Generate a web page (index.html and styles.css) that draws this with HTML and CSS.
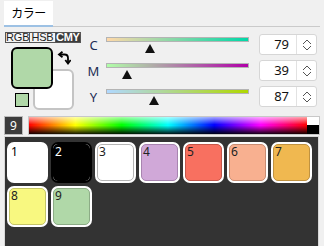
FILE: index.html
```
<!DOCTYPE html>
<html lang="ja">
<head>
  <meta charset="UTF-8" />
  <title>カラー</title>
  <link rel="stylesheet" href="styles.css">
</head>
<body>
  <div class="tabs">
    <div class="tab">カラー</div>
  </div>

  <div class="main">
    <div class="left">
      <div class="modes">
        <span>RGB</span><span>HSB</span><span class="on">CMY</span>
      </div>
      <div class="chips">
        <div class="chip-back"></div>
        <div class="chip-front"></div>
        <svg class="swap" width="14" height="14" viewBox="0 0 14 14">
          <path d="M3 3.5 H7.5 Q11 3.5 11 7 V11.5" fill="none" stroke="#000" stroke-width="1.8"/>
          <path d="M5.5 0.8 L2 3.5 L5.5 6.2" fill="none" stroke="#000" stroke-width="1.8"/>
          <path d="M8.3 9 L11 12.5 L13.7 9" fill="none" stroke="#000" stroke-width="1.8"/>
        </svg>
        <div class="chip-small"></div>
      </div>
    </div>

    <div class="sliders">
      <div class="row">
        <span class="label">C</span>
        <div class="track-wrap">
          <div class="track track-c"></div>
          <div class="thumb" style="left: 38.8px"></div>
        </div>
        <div class="num">
          <span class="val">79</span>
          <span class="spin">
            <svg width="10" height="14" viewBox="0 0 10 14"><polyline points="1,6 5,2 9,6" fill="none" stroke="#555" stroke-width="1"/><polyline points="1,8 5,12 9,8" fill="none" stroke="#555" stroke-width="1"/></svg>
          </span>
        </div>
      </div>
      <div class="row">
        <span class="label">M</span>
        <div class="track-wrap">
          <div class="track track-m"></div>
          <div class="thumb" style="left: 16.4px"></div>
        </div>
        <div class="num">
          <span class="val">39</span>
          <span class="spin">
            <svg width="10" height="14" viewBox="0 0 10 14"><polyline points="1,6 5,2 9,6" fill="none" stroke="#555" stroke-width="1"/><polyline points="1,8 5,12 9,8" fill="none" stroke="#555" stroke-width="1"/></svg>
          </span>
        </div>
      </div>
      <div class="row">
        <span class="label">Y</span>
        <div class="track-wrap">
          <div class="track track-y"></div>
          <div class="thumb" style="left: 43.3px"></div>
        </div>
        <div class="num">
          <span class="val">87</span>
          <span class="spin">
            <svg width="10" height="14" viewBox="0 0 10 14"><polyline points="1,6 5,2 9,6" fill="none" stroke="#555" stroke-width="1"/><polyline points="1,8 5,12 9,8" fill="none" stroke="#555" stroke-width="1"/></svg>
          </span>
        </div>
      </div>
    </div>
  </div>

  <div class="hue-row">
    <div class="index">9</div>
    <div class="spectrum">
      <div class="hues"></div>
      <div class="bw"></div>
    </div>
  </div>

  <div class="palette">
    <div class="swatches">
      <div class="sw c1"><div class="fill">1</div></div>
      <div class="sw c2"><div class="fill">2</div></div>
      <div class="sw c3"><div class="fill">3</div></div>
      <div class="sw c4"><div class="fill">4</div></div>
      <div class="sw c5"><div class="fill">5</div></div>
      <div class="sw c6"><div class="fill">6</div></div>
      <div class="sw c7"><div class="fill">7</div></div>
      <div class="sw c8"><div class="fill">8</div></div>
      <div class="sw c9"><div class="fill">9</div></div>
    </div>
  </div>
</body>
</html>
```

FILE: styles.css
```
body {
  margin: 0;
  background: #f0f0f0;
  font-family: "Noto Sans", "Noto Sans CJK JP", sans-serif;
  width: 324px;
  height: 246px;
  overflow: hidden;
}

.tabs {
  margin: 0 4px;
  padding-top: 1px;
  height: 25px;
  border-bottom: 1px solid #cacaca;
  display: flex;
}
.tab {
  width: 49px;
  height: 24px;
  background: #fff;
  border-bottom: 2px solid #9dc1e4;
  margin-bottom: -1px;
  font-family: "Noto Sans CJK JP", sans-serif;
  font-size: 12px;
  letter-spacing: -0.5px;
  line-height: 24px;
  text-align: center;
  color: #000;
}

.main {
  display: flex;
  height: 89px;
  padding-left: 4px;
}
.left {
  width: 82px;
}
.modes {
  display: flex;
  margin: 5px 0 0 1px;
  width: 76px;
  height: 11px;
  box-sizing: border-box;
  border: 1px solid #555;
  font-family: "Liberation Sans", sans-serif;
  font-size: 11px;
  line-height: 9px;
  letter-spacing: -0.2px;
  color: #222;
  background: #f4f4f4;
}
.modes span {
  width: 25px;
  text-align: center;
  border-left: 1px solid #555;
}
.modes span:first-child {
  border-left: none;
  width: 24px;
}
.modes .on {
  background: #3c3c3c;
  color: #fff;
  font-weight: bold;
}

.chips {
  position: relative;
  height: 69px;
}
.chip-front, .chip-back, .chip-small, .swap {
  position: absolute;
}
.chip-back {
  left: 29px;
  top: 26px;
  width: 41px;
  height: 41px;
  box-sizing: border-box;
  background: #fff;
  border: 2px solid #c4c4c4;
  border-radius: 6px;
}
.chip-front {
  left: 7px;
  top: 4px;
  width: 42px;
  height: 42px;
  box-sizing: border-box;
  background: #b0d8a8;
  border: 2px solid #000;
  border-radius: 6px;
}
.swap {
  left: 53px;
  top: 8px;
}
.chip-small {
  left: 11px;
  top: 50px;
  width: 14px;
  height: 14px;
  box-sizing: border-box;
  background: #b0d8a8;
  border: 1px solid #000;
}

.sliders {
  padding-top: 7px;
  display: flex;
  flex-direction: column;
  gap: 6px;
}
.row {
  display: flex;
  height: 20px;
}
.label {
  width: 15px;
  text-align: center;
  font-size: 13px;
  line-height: 20px;
  padding-top: 1px;
  color: #1c2d55;
}
.track-wrap {
  position: relative;
  width: 143px;
  margin-left: 5px;
}
.track {
  margin-top: 3px;
  height: 5px;
  box-sizing: border-box;
  border: 1px solid #b4b4b4;
}
.track-c { background: linear-gradient(to right, #ffd8a8, #00d8a8); }
.track-m { background: linear-gradient(to right, #b0ffa8, #b000a8); }
.track-y { background: linear-gradient(to right, #b0d8ff, #b0d800); }
.thumb {
  position: absolute;
  top: 10px;
  width: 0;
  height: 0;
  border-left: 5.5px solid transparent;
  border-right: 5.5px solid transparent;
  border-bottom: 9px solid #111;
}
.num {
  display: flex;
  margin-left: 10px;
  width: 58px;
  height: 21px;
  box-sizing: border-box;
  background: #fff;
  border: 1px solid #d6d6d6;
  border-radius: 3px;
}
.val {
  width: 37px;
  box-sizing: border-box;
  padding-right: 7px;
  text-align: right;
  font-size: 13px;
  line-height: 19px;
  color: #111;
  border-right: 1px solid #e2e2e2;
}
.spin {
  flex: 1;
  display: flex;
  align-items: center;
  justify-content: center;
}

.hue-row {
  display: flex;
  gap: 5px;
  margin: 0 4px;
  height: 19px;
}
.index {
  width: 19px;
  height: 19px;
  box-sizing: border-box;
  background: #3c3c3c;
  border: 1px solid #bcbcbc;
  color: #fff;
  font-size: 12px;
  line-height: 17px;
  text-align: center;
}
.spectrum {
  flex: 1;
  display: flex;
  box-sizing: border-box;
  border: 1px solid #c8c8c8;
}
.hues {
  flex: 1;
  background:
    linear-gradient(to bottom, rgba(255,255,255,0.65) 0%, rgba(255,255,255,0) 45%, rgba(0,0,0,0) 50%, rgba(0,0,0,0.92) 100%),
    linear-gradient(to right, #f00, #ff0, #0f0, #0ff, #00f, #f0f, #f00);
}
.bw {
  width: 12px;
  background: linear-gradient(to bottom, #fff 50%, #000 50%);
}

.palette {
  margin: 1px 5px 0 4px;
  height: 120px;
  box-sizing: border-box;
  border: 1px solid #d8d8d8;
  background: #333;
  padding: 5px 0 0 2px;
}
.swatches {
  display: flex;
  flex-wrap: wrap;
  gap: 3px;
  width: 305px;
}
.sw {
  width: 41px;
  height: 41px;
  box-sizing: border-box;
  border: 2px solid #fff;
  border-radius: 7px;
  background: #fff;
}
.fill {
  height: 100%;
  box-sizing: border-box;
  border: 1px solid;
  border-radius: 5px;
  padding-left: 1px;
  font-size: 12px;
  line-height: 13px;
  color: #222;
}
.c1 .fill { background: #fff; border-color: #fff; color: #000; }
.c2 { border-color: #000; }
.c2 .fill { background: #000; border-color: #000; color: #fff; }
.c3 .fill { background: #fff; border-color: #b4b4b4; }
.c4 .fill { background: #d0a8d8; border-color: #a884b0; }
.c5 .fill { background: #f87060; border-color: #c4564a; }
.c6 .fill { background: #f8b090; border-color: #c88c72; }
.c7 .fill { background: #f0b850; border-color: #c09240; }
.c8 .fill { background: #f8f880; border-color: #c4c466; }
.c9 .fill { background: #b0d8a8; border-color: #8cac86; }
```
